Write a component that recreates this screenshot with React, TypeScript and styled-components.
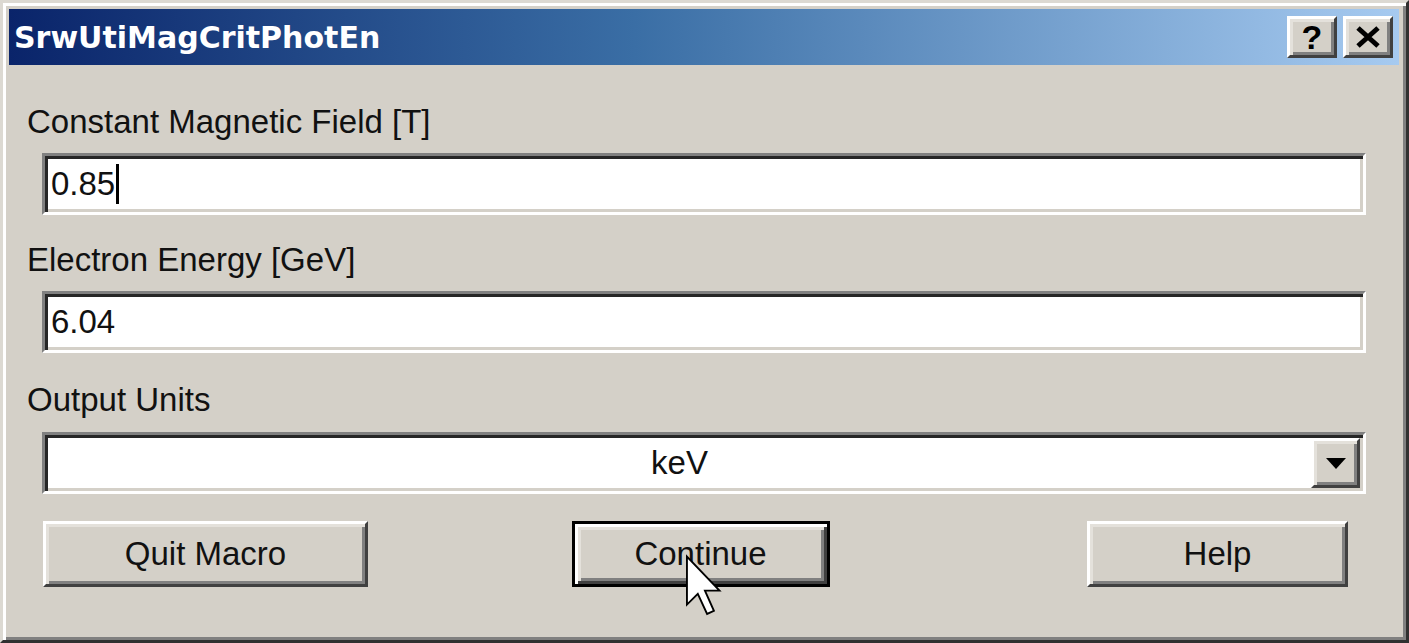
import React from "react";
import styled, { createGlobalStyle, css } from "styled-components";

const GlobalStyle = createGlobalStyle`
  html, body {
    margin: 0;
    padding: 0;
    background: #d4d0c8;
  }
  * { box-sizing: border-box; }
`;

const raised = css`
  border-style: solid;
  border-width: 3px;
  border-color: #ffffff #404040 #404040 #ffffff;
  box-shadow: inset 3px 3px 0 #e4e1db, inset -3px -3px 0 #808080;
  background: #d4d0c8;
`;

const sunken = css`
  border-style: solid;
  border-width: 3px;
  border-color: #808080 #ffffff #ffffff #808080;
  box-shadow: inset 3px 3px 0 #262626, inset -3px -3px 0 #d4d0c8;
  background: #ffffff;
`;

const Window = styled.div`
  position: relative;
  width: 1409px;
  height: 643px;
  display: flex;
  flex-direction: column;
  border-style: solid;
  border-width: 3px;
  border-color: #dcd9d2 #303030 #303030 #dcd9d2;
  box-shadow: inset 3px 3px 0 #ffffff, inset -3px -3px 0 #808080;
  padding: 6px 7px 6px 6px;
  background: #d4d0c8;
  font-family: "Liberation Sans", Arial, sans-serif;
`;

const TitleBar = styled.div`
  height: 56px;
  flex: none;
  display: flex;
  align-items: center;
  justify-content: space-between;
  padding: 0 6px 0 5px;
  background: linear-gradient(to right, #0a246a 0%, #3a6ea5 45%, #a6caf0 100%);
`;

const TitleText = styled.span`
  font-family: "DejaVu Sans", Verdana, sans-serif;
  font-weight: bold;
  font-size: 30px;
  color: #ffffff;
`;

const CaptionButtons = styled.div`
  display: flex;
  gap: 6px;
`;

const CaptionButton = styled.div`
  ${raised};
  width: 50px;
  height: 42px;
  display: flex;
  align-items: center;
  justify-content: center;
  font-family: "Liberation Sans", Arial, sans-serif;
  font-weight: bold;
  font-size: 34px;
  line-height: 1;
  color: #000;
`;

const Content = styled.div`
  flex: 1;
  display: flex;
  flex-direction: column;
  padding: 37px 33px 0 18px;
`;

const FieldGroup = styled.div<{ $gap: number }>`
  display: flex;
  flex-direction: column;
  margin-bottom: ${(p) => p.$gap}px;
`;

const Label = styled.div`
  font-size: 33px;
  line-height: 40px;
  color: #111;
  height: 40px;
  white-space: nowrap;
`;

const TextField = styled.div`
  ${sunken};
  margin: 11px 0 0 15px;
  height: 62px;
  display: flex;
  align-items: center;
  padding: 0 0 0 6px;
  font-size: 33px;
  color: #111;
`;

const Caret = styled.span`
  display: inline-block;
  width: 3px;
  height: 40px;
  background: #000;
  margin-left: 1px;
`;

const Select = styled.div`
  ${sunken};
  margin: 12px 0 0 15px;
  height: 62px;
  display: flex;
  align-items: stretch;
  padding: 3px;
`;

const SelectValue = styled.div`
  flex: 1;
  display: flex;
  align-items: center;
  justify-content: center;
  font-size: 33px;
  color: #111;
`;

const DropButton = styled.div`
  ${raised};
  width: 49px;
  display: flex;
  align-items: center;
  justify-content: center;
`;

const ButtonRow = styled.div`
  display: grid;
  grid-template-columns: 1fr auto 1fr;
  align-items: center;
  margin: 27px 0 0 16px;
  padding-right: 8px;
`;

const PushButton = styled.div<{ $width: number; $align: string; $default?: boolean }>`
  position: relative;
  justify-self: ${(p) => p.$align};
  width: ${(p) => p.$width}px;
  height: 66px;
  display: flex;
  align-items: center;
  justify-content: center;
  font-size: 33px;
  color: #111;
  ${(p) =>
    p.$default
      ? css`
          border: 3px solid #000;
          background: #d4d0c8;
          box-shadow: inset 3px 3px 0 #ffffff, inset -3px -3px 0 #404040,
            inset 6px 6px 0 #e4e1db, inset -6px -6px 0 #808080;
        `
      : raised}
`;

const HelpButton = styled(PushButton)`
  margin-right: 10px;
`;

const Pointer = styled.svg`
  position: absolute;
  left: 110px;
  top: 31px;
  overflow: visible;
`;

export default function App() {
  return (
    <>
      <GlobalStyle />
      <Window>
        <TitleBar>
          <TitleText>SrwUtiMagCritPhotEn</TitleText>
          <CaptionButtons>
            <CaptionButton>?</CaptionButton>
            <CaptionButton>
              <svg width="26" height="22" viewBox="0 0 26 22">
                <path d="M3 2 L23 20 M23 2 L3 20" stroke="#000" strokeWidth="5" />
              </svg>
            </CaptionButton>
          </CaptionButtons>
        </TitleBar>
        <Content>
          <FieldGroup $gap={25}>
            <Label>Constant Magnetic Field [T]</Label>
            <TextField>
              0.85
              <Caret />
            </TextField>
          </FieldGroup>
          <FieldGroup $gap={27}>
            <Label>Electron Energy [GeV]</Label>
            <TextField>6.04</TextField>
          </FieldGroup>
          <FieldGroup $gap={0}>
            <Label>Output Units</Label>
            <Select>
              <SelectValue>keV</SelectValue>
              <DropButton>
                <svg width="20" height="11" viewBox="0 0 20 11">
                  <path d="M0 0 L20 0 L10 11 Z" fill="#000" />
                </svg>
              </DropButton>
            </Select>
          </FieldGroup>
          <ButtonRow>
            <PushButton $width={325} $align="start">
              Quit Macro
            </PushButton>
            <PushButton $width={258} $align="center" $default>
              Continue
              <Pointer width="38" height="62" viewBox="0 0 12 20">
                <path
                  d="M0.5 0.5 L0.5 16 L4 12.5 L7 19 L9.2 18 L6.3 11.5 L11 11.5 Z"
                  fill="#fff"
                  stroke="#000"
                  strokeWidth="0.6"
                  strokeLinejoin="miter"
                />
              </Pointer>
            </PushButton>
            <HelpButton $width={261} $align="end">
              Help
            </HelpButton>
          </ButtonRow>
        </Content>
      </Window>
    </>
  );
}
